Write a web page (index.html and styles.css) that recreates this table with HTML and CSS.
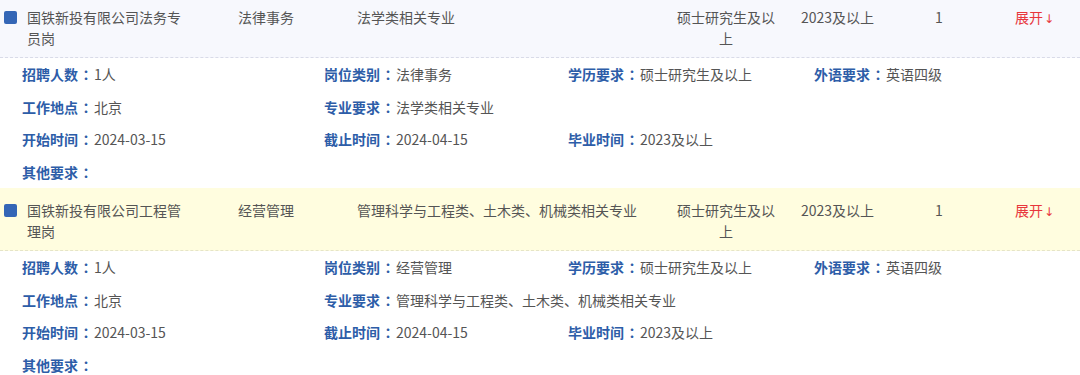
FILE: index.html
```html
<!DOCTYPE html>
<html lang="zh-CN">
<head>
<meta charset="utf-8">
<title>岗位列表</title>
<link rel="stylesheet" href="styles.css">
</head>
<body>
<div class="list">
  <section class="job">
    <div class="row row-blue">
      <div class="c c-name"><span class="sq"></span><span class="name">国铁新投有限公司法务专员岗</span></div>
      <div class="c c-cat">法律事务</div>
      <div class="c c-major">法学类相关专业</div>
      <div class="c c-edu">硕士研究生及以上</div>
      <div class="c c-grad">2023及以上</div>
      <div class="c c-num">1</div>
      <div class="c c-open">展开<span class="arrow">↓</span></div>
    </div>
    <div class="detail">
      <div class="d"><b>招聘人数<span class="colon">：</span></b>1人</div>
      <div class="d"><b>岗位类别<span class="colon">：</span></b>法律事务</div>
      <div class="d"><b>学历要求<span class="colon">：</span></b>硕士研究生及以上</div>
      <div class="d"><b>外语要求<span class="colon">：</span></b>英语四级</div>
      <div class="d"><b>工作地点<span class="colon">：</span></b>北京</div>
      <div class="d span3"><b>专业要求<span class="colon">：</span></b>法学类相关专业</div>
      <div class="d"><b>开始时间<span class="colon">：</span></b>2024-03-15</div>
      <div class="d"><b>截止时间<span class="colon">：</span></b>2024-04-15</div>
      <div class="d span2"><b>毕业时间<span class="colon">：</span></b>2023及以上</div>
      <div class="d span4"><b>其他要求<span class="colon">：</span></b></div>
    </div>
  </section>
  <section class="job">
    <div class="row row-yellow">
      <div class="c c-name"><span class="sq"></span><span class="name">国铁新投有限公司工程管理岗</span></div>
      <div class="c c-cat">经营管理</div>
      <div class="c c-major">管理科学与工程类、土木类、机械类相关专业</div>
      <div class="c c-edu">硕士研究生及以上</div>
      <div class="c c-grad">2023及以上</div>
      <div class="c c-num">1</div>
      <div class="c c-open">展开<span class="arrow">↓</span></div>
    </div>
    <div class="detail">
      <div class="d"><b>招聘人数<span class="colon">：</span></b>1人</div>
      <div class="d"><b>岗位类别<span class="colon">：</span></b>经营管理</div>
      <div class="d"><b>学历要求<span class="colon">：</span></b>硕士研究生及以上</div>
      <div class="d"><b>外语要求<span class="colon">：</span></b>英语四级</div>
      <div class="d"><b>工作地点<span class="colon">：</span></b>北京</div>
      <div class="d span3"><b>专业要求<span class="colon">：</span></b>管理科学与工程类、土木类、机械类相关专业</div>
      <div class="d"><b>开始时间<span class="colon">：</span></b>2024-03-15</div>
      <div class="d"><b>截止时间<span class="colon">：</span></b>2024-04-15</div>
      <div class="d span2"><b>毕业时间<span class="colon">：</span></b>2023及以上</div>
      <div class="d span4"><b>其他要求<span class="colon">：</span></b></div>
    </div>
  </section>
</div>
</body>
</html>
```

FILE: styles.css
```css
* { box-sizing: border-box; }
html, body { margin: 0; padding: 0; background: #fff; }
body {
  font-family: "Noto Sans CJK SC", "Noto Sans", sans-serif;
  font-size: 14px;
  color: #555;
  width: 1080px;
  height: 375px;
  overflow: hidden;
}
.list { margin-top: -5px; }

.row {
  display: grid;
  grid-template-columns: 238px 119px 316px 106px 134px 80px 1fr;
  padding: 12px 0 8px;
  line-height: 21px;
  border-bottom: 1px dashed #d9dbe8;
}
.row-blue { background: #f7f8fd; }
.row-yellow { background: #fffddf; border-bottom-color: #e5e4c8; }

.c-name { display: flex; align-items: flex-start; padding-left: 4px; }
.sq {
  flex: none;
  width: 13px;
  height: 13px;
  margin-top: 4px;
  margin-right: 10px;
  background: #3466b6;
  border-radius: 2px;
}
.name { width: 156px; }
.c-edu { text-align: center; }
.c-grad, .c-num, .c-open { padding-left: 22px; }
.c-open { color: #e8363c; }
.arrow { font-family: "DejaVu Sans", sans-serif; font-size: 12px; margin-left: 1px; }

.detail {
  display: grid;
  grid-template-columns: 302px 244px 246px 1fr;
  padding: 0 0 0 22px;
  line-height: 32.5px;
}
.d b { font-weight: 700; color: #2d5da8; }
.colon {
  display: inline-block;
  width: 16px;
  text-align: center;
  font-family: "Noto Sans CJK JP", sans-serif;
}
.span2 { grid-column: span 2; }
.span3 { grid-column: span 3; }
.span4 { grid-column: span 4; }
```
